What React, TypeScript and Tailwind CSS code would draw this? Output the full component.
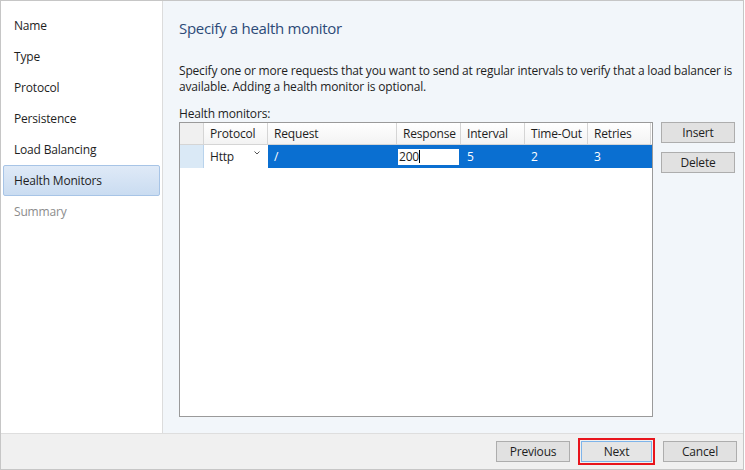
import React from "react";

const font = { fontFamily: '"Open Sans", "Noto Sans", sans-serif', letterSpacing: "-0.18px" };

function SideItem({ label, active, disabled }: { label: string; active?: boolean; disabled?: boolean }) {
  return (
    <div
      className={
        "h-[31px] mx-[2px] pl-[10px] flex items-center text-[12px] rounded-[2px] border " +
        (active
          ? "bg-gradient-to-b from-[#dfeaf7] to-[#cadcf1] border-[#a7c4e6] text-[#1e1e1e]"
          : "border-transparent " + (disabled ? "text-[#8c8c8c]" : "text-[#1e1e1e]"))
      }
    >
      {label}
    </div>
  );
}

function Btn({ label, className = "" }: { label: string; className?: string }) {
  return (
    <div
      className={
        "w-[74px] h-[21px] flex items-center justify-center text-[12px] text-[#1e1e1e] bg-[#e1e1e1] border border-[#adadad] " +
        className
      }
    >
      {label}
    </div>
  );
}

export default function App() {
  const cols = [
    { label: "Protocol", w: 64 },
    { label: "Request", w: 129 },
    { label: "Response", w: 64 },
    { label: "Interval", w: 64 },
    { label: "Time-Out", w: 63 },
    { label: "Retries", w: 63 },
  ];
  return (
    <div className="w-[745px] h-[470px] bg-white" style={font}>
      <div className="w-[744px] h-[470px] border border-[#c6c6c6] flex flex-col">
        <div className="flex flex-1 min-h-0">
          <div className="w-[162px] shrink-0 bg-white border-r border-[#dcdcdc] pt-[9px] flex flex-col">
            <SideItem label="Name" />
            <SideItem label="Type" />
            <SideItem label="Protocol" />
            <SideItem label="Persistence" />
            <SideItem label="Load Balancing" />
            <SideItem label="Health Monitors" active />
            <SideItem label="Summary" disabled />
          </div>
          <div className="flex-1 min-w-0 bg-[#f2f6fa] pl-[16px] flex flex-col">
            <div className="text-[15px] tracking-[-0.3px] text-[#2c4a78] mt-[16px] leading-[22px]">Specify a health monitor</div>
            <div className="text-[12px] text-[#1e1e1e] leading-[16px] mt-[24px] whitespace-nowrap">
              Specify one or more requests that you want to send at regular intervals to verify that a load balancer is
              <br />
              available. Adding a health monitor is optional.
            </div>
            <div className="text-[12px] text-[#1e1e1e] leading-[15px] mt-[11px]">Health monitors:</div>
            <div className="flex mt-[1px] gap-[8px]">
              <div className="w-[474px] h-[295px] shrink-0 border border-[#9a9a9a] bg-white flex flex-col">
                <div className="flex h-[22px] border-b border-[#d5d5d5]">
                  <div className="w-[24px] bg-[#f0f0f0] border-r border-[#d5d5d5]" />
                  {cols.map((c) => (
                    <div
                      key={c.label}
                      style={{ width: c.w }}
                      className="border-r border-[#d5d5d5] bg-gradient-to-b from-white to-[#f3f3f3] flex items-center pl-[6px] text-[12px] text-[#1e1e1e]"
                    >
                      {c.label}
                    </div>
                  ))}
                </div>
                <div className="flex h-[23px]">
                  <div className="w-[24px] bg-[#dae9f6] border-r border-[#b9d3ec]" />
                  <div className="w-[64px] bg-white flex items-center pl-[6px] text-[12px] text-[#1e1e1e] relative">
                    Http
                    <svg className="absolute left-[50px] top-[6px]" width="6" height="4" viewBox="0 0 6 4">
                      <path d="M0.5 0.5 L3 3 L5.5 0.5" fill="none" stroke="#555" strokeWidth="1" />
                    </svg>
                  </div>
                  <div className="w-[129px] bg-[#0a6fd1] flex items-center pl-[6px] text-[12px] text-white">/</div>
                  <div className="w-[64px] bg-[#0a6fd1] flex items-center pl-[1px]">
                    <div className="w-[61px] h-[16px] bg-white flex items-center text-[12px] text-[#1e1e1e] pl-[1px]">
                      200<span className="w-px h-[13px] bg-black" />
                    </div>
                  </div>
                  <div className="w-[64px] bg-[#0a6fd1] flex items-center pl-[6px] text-[12px] text-white">5</div>
                  <div className="w-[63px] bg-[#0a6fd1] flex items-center pl-[6px] text-[12px] text-white">2</div>
                  <div className="flex-1 bg-[#0a6fd1] flex items-center pl-[6px] text-[12px] text-white">3</div>
                </div>
              </div>
              <div className="flex flex-col gap-[9px]">
                <Btn label="Insert" className="h-[20px]" />
                <Btn label="Delete" className="h-[20px]" />
              </div>
            </div>
          </div>
        </div>
        <div className="h-[36px] bg-[#f0f0f0] border-t border-[#dedede] flex items-center justify-end pr-[6px] gap-[8px]">
          <Btn label="Previous" />
          <div className="border-2 border-[#e8141c] p-px">
            <div className="w-[71px] h-[21px] flex items-center justify-center text-[12px] text-[#1e1e1e] bg-[#e5e5e5] border border-[#7eb4ea]">
              Next
            </div>
          </div>
          <Btn label="Cancel" />
        </div>
      </div>
    </div>
  );
}
